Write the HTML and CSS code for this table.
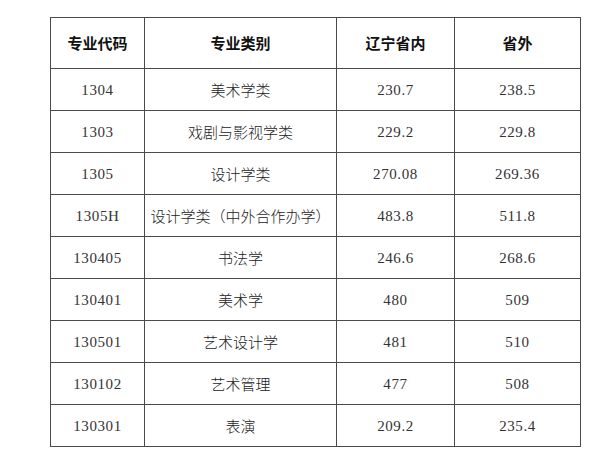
FILE: index.html
```html
<!DOCTYPE html>
<html lang="zh">
<head>
<meta charset="utf-8">
<link rel="stylesheet" href="styles.css">
</head>
<body>
<table class="scores">
  <colgroup>
    <col class="c1"><col class="c2"><col class="c3"><col class="c4">
  </colgroup>
  <thead>
    <tr><th>专业代码</th><th>专业类别</th><th>辽宁省内</th><th>省外</th></tr>
  </thead>
  <tbody>
    <tr><td class="num">1304</td><td>美术学类</td><td class="num">230.7</td><td class="num">238.5</td></tr>
    <tr><td class="num">1303</td><td>戏剧与影视学类</td><td class="num">229.2</td><td class="num">229.8</td></tr>
    <tr><td class="num">1305</td><td>设计学类</td><td class="num">270.08</td><td class="num">269.36</td></tr>
    <tr><td class="num">1305H</td><td>设计学类（中外合作办学）</td><td class="num">483.8</td><td class="num">511.8</td></tr>
    <tr><td class="num">130405</td><td>书法学</td><td class="num">246.6</td><td class="num">268.6</td></tr>
    <tr><td class="num">130401</td><td>美术学</td><td class="num">480</td><td class="num">509</td></tr>
    <tr><td class="num">130501</td><td>艺术设计学</td><td class="num">481</td><td class="num">510</td></tr>
    <tr><td class="num">130102</td><td>艺术管理</td><td class="num">477</td><td class="num">508</td></tr>
    <tr><td class="num">130301</td><td>表演</td><td class="num">209.2</td><td class="num">235.4</td></tr>
  </tbody>
</table>
</body>
</html>
```
FILE: styles.css
```css
html, body {
  margin: 0;
  padding: 0;
  background: #ffffff;
}
body {
  padding: 17px 0 0 50px;
  font-family: "Noto Sans CJK SC", "Noto Sans", sans-serif;
  color: #222;
}
.scores {
  border-collapse: collapse;
  table-layout: fixed;
  width: 530px;
}
.c1 { width: 94px; }
.c2 { width: 192px; }
.c3 { width: 118px; }
.c4 { width: 126px; }
.scores th,
.scores td {
  border: 1px solid #4a4a4a;
  text-align: center;
  vertical-align: middle;
  padding: 0;
  font-size: 15px;
  line-height: 18px;
}
.scores th {
  height: 50px;
  font-weight: bold;
  color: #111;
}
.scores td {
  height: 41px;
  font-weight: 300;
}
.scores td.num {
  font-family: "Liberation Serif", "Times New Roman", serif;
  font-size: 15px;
  letter-spacing: 0.6px;
  font-weight: normal;
  color: #333;
}
```
